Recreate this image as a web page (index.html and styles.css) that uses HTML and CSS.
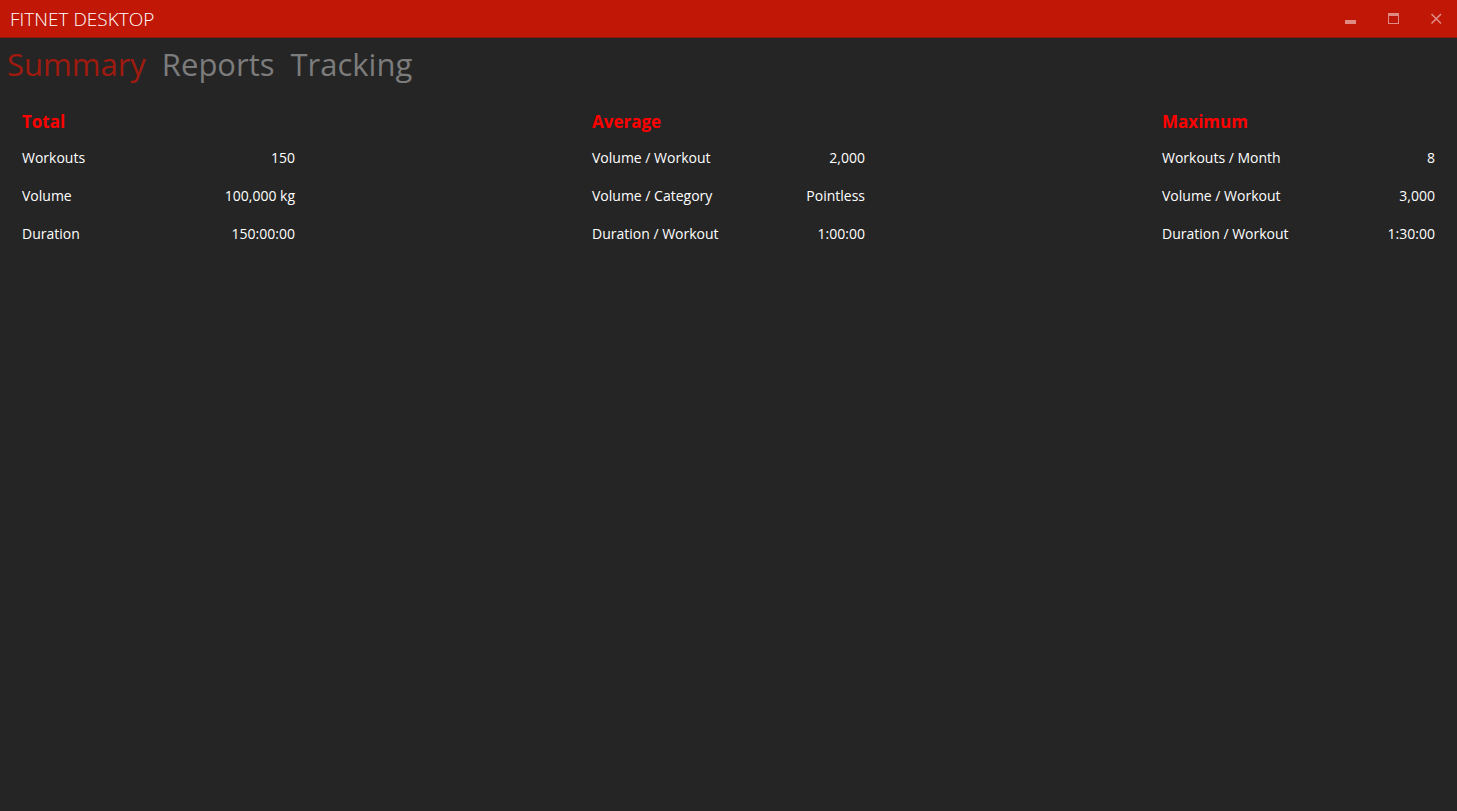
FILE: index.html
```html
<!DOCTYPE html>
<html lang="en">
<head>
<meta charset="utf-8">
<title>FitNet Desktop</title>
<link rel="stylesheet" href="styles.css">
</head>
<body>
<header class="titlebar">
  <h1 class="title">FITNET DESKTOP</h1>
  <div class="window-controls">
    <button class="control" type="button" aria-label="Minimize"><svg width="13" height="13" viewBox="0 0 13 13"><path d="M1 8h11v4H1z" fill="currentColor"/></svg></button>
    <button class="control" type="button" aria-label="Maximize"><svg width="13" height="13" viewBox="0 0 13 13"><path d="M1 1h11v11H1z" fill="currentColor"/><path d="M2 4h9v7H2z" fill="#b8180b"/><path d="M3 5h7v5H3z" fill="#c01707"/></svg></button>
    <button class="control" type="button" aria-label="Close"><svg width="13" height="13" viewBox="0 0 13 13"><path d="M1.500 2l9.500 9.500M11 2l-9.500 9.500" stroke="currentColor" stroke-width="1.600"/></svg></button>
  </div>
</header>
<nav class="tabs">
  <a class="tab tab-active" href="#summary" aria-current="page">Summary</a>
  <a class="tab" href="#reports">Reports</a>
  <a class="tab" href="#tracking">Tracking</a>
</nav>
<main class="summary" id="summary">
  <section class="group">
    <h2 class="heading">Total</h2>
    <dl class="stats">
      <div class="row"><dt>Workouts</dt><dd>150</dd></div>
      <div class="row"><dt>Volume</dt><dd>100,000 kg</dd></div>
      <div class="row"><dt>Duration</dt><dd>150:00:00</dd></div>
    </dl>
  </section>
  <section class="group">
    <h2 class="heading">Average</h2>
    <dl class="stats">
      <div class="row"><dt>Volume / Workout</dt><dd>2,000</dd></div>
      <div class="row"><dt>Volume / Category</dt><dd>Pointless</dd></div>
      <div class="row"><dt>Duration / Workout</dt><dd>1:00:00</dd></div>
    </dl>
  </section>
  <section class="group">
    <h2 class="heading">Maximum</h2>
    <dl class="stats">
      <div class="row"><dt>Workouts / Month</dt><dd>8</dd></div>
      <div class="row"><dt>Volume / Workout</dt><dd>3,000</dd></div>
      <div class="row"><dt>Duration / Workout</dt><dd>1:30:00</dd></div>
    </dl>
  </section>
</main>
</body>
</html>
```
FILE: styles.css
```css
* { box-sizing: border-box; }
body {
  margin: 0;
  min-height: 100vh;
  background: #252525;
  color: #fff;
  font-family: "Open Sans", "Noto Sans", sans-serif;
  font-size: 14px;
}
.titlebar {
  display: flex;
  align-items: center;
  justify-content: space-between;
  height: 38px;
  padding-left: 10px;
  border-bottom: 1px solid #8a1a10;
  background: #c01707;
}
.title {
  margin: 0;
  font-size: 19px;
  font-weight: 300;
}
.window-controls { display: flex; align-self: stretch; }
.control {
  display: flex;
  align-items: center;
  justify-content: center;
  width: 43px;
  padding: 0 0 0 2px;
  border: 0;
  background: none;
  color: #df8b83;
}
.tabs {
  display: flex;
  gap: 16px;
  padding: 0 7px 2px;
}
.tab {
  color: #7c7c7c;
  font-size: 31px;
  line-height: 52px;
  text-decoration: none;
}
.tab-active { color: #a01a0f; }
.summary {
  display: flex;
  justify-content: space-between;
  padding: 18px 22px;
}
.group { width: 273px; }
.heading {
  margin: 0 0 5px;
  color: #f00;
  font-size: 17px;
  font-weight: 700;
  line-height: 24px;
}
.stats { margin: 0; }
.row {
  display: flex;
  justify-content: space-between;
  line-height: 38px;
}
.row dd { margin: 0; }
```
